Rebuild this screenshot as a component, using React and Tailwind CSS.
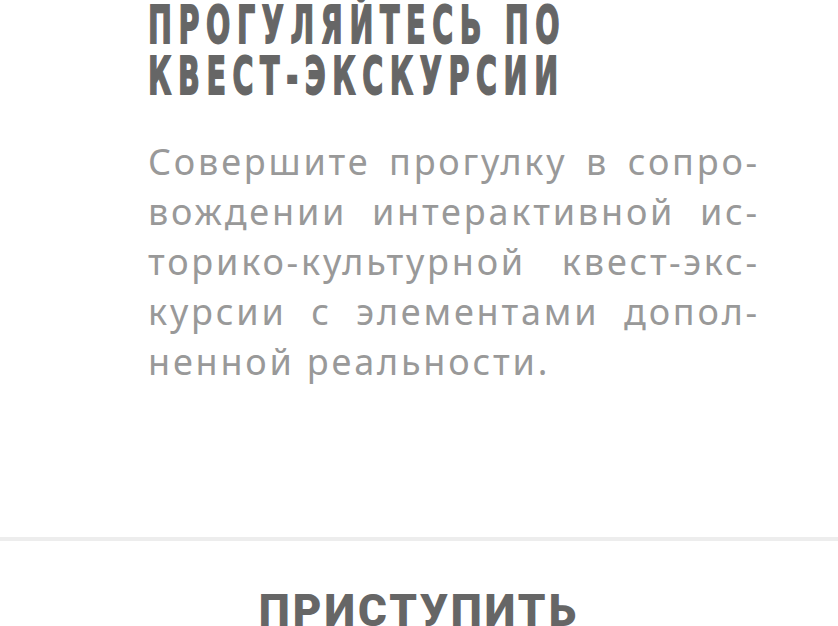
export default function App() {
  const lines = [
    'Совершите прогулку в сопро-',
    'вождении интерактивной ис-',
    'торико-культурной квест-экс-',
    'курсии с элементами допол-',
  ];

  return (
    <div className="w-[838px] h-[626px] overflow-hidden bg-white">
      <div className="pl-[148px] w-[760px]">
        {/* title */}
        <h1
          className="text-[#666666] uppercase font-bold text-[52px] leading-[51px] tracking-[12px] whitespace-nowrap origin-left scale-x-[0.55] [-webkit-text-stroke:1.8px_#666666]"
          style={{ fontFamily: '"DejaVu Sans", sans-serif' }}
        >
          <div>Прогуляйтесь по</div>
          <div>квест-экскурсии</div>
        </h1>

        {/* description */}
        <div
          className="mt-[35px] text-[#999999] text-[36px] leading-[50px] tracking-[2.8px]"
          style={{ fontFamily: '"Noto Sans", sans-serif' }}
        >
          {lines.map((line) => (
            <div key={line} className="text-justify [text-align-last:justify]">
              {line}
            </div>
          ))}
          <div>ненной реальности.</div>
        </div>
      </div>

      <div className="mt-[150px] h-[4px] bg-[#ededed]" />

      <div className="pt-[40px] text-center">
        <span
          className="text-[#666666] uppercase font-black text-[44px] leading-[60px] tracking-[3px]"
          style={{ fontFamily: 'Roboto, sans-serif' }}
        >
          Приступить
        </span>
      </div>
    </div>
  );
}
